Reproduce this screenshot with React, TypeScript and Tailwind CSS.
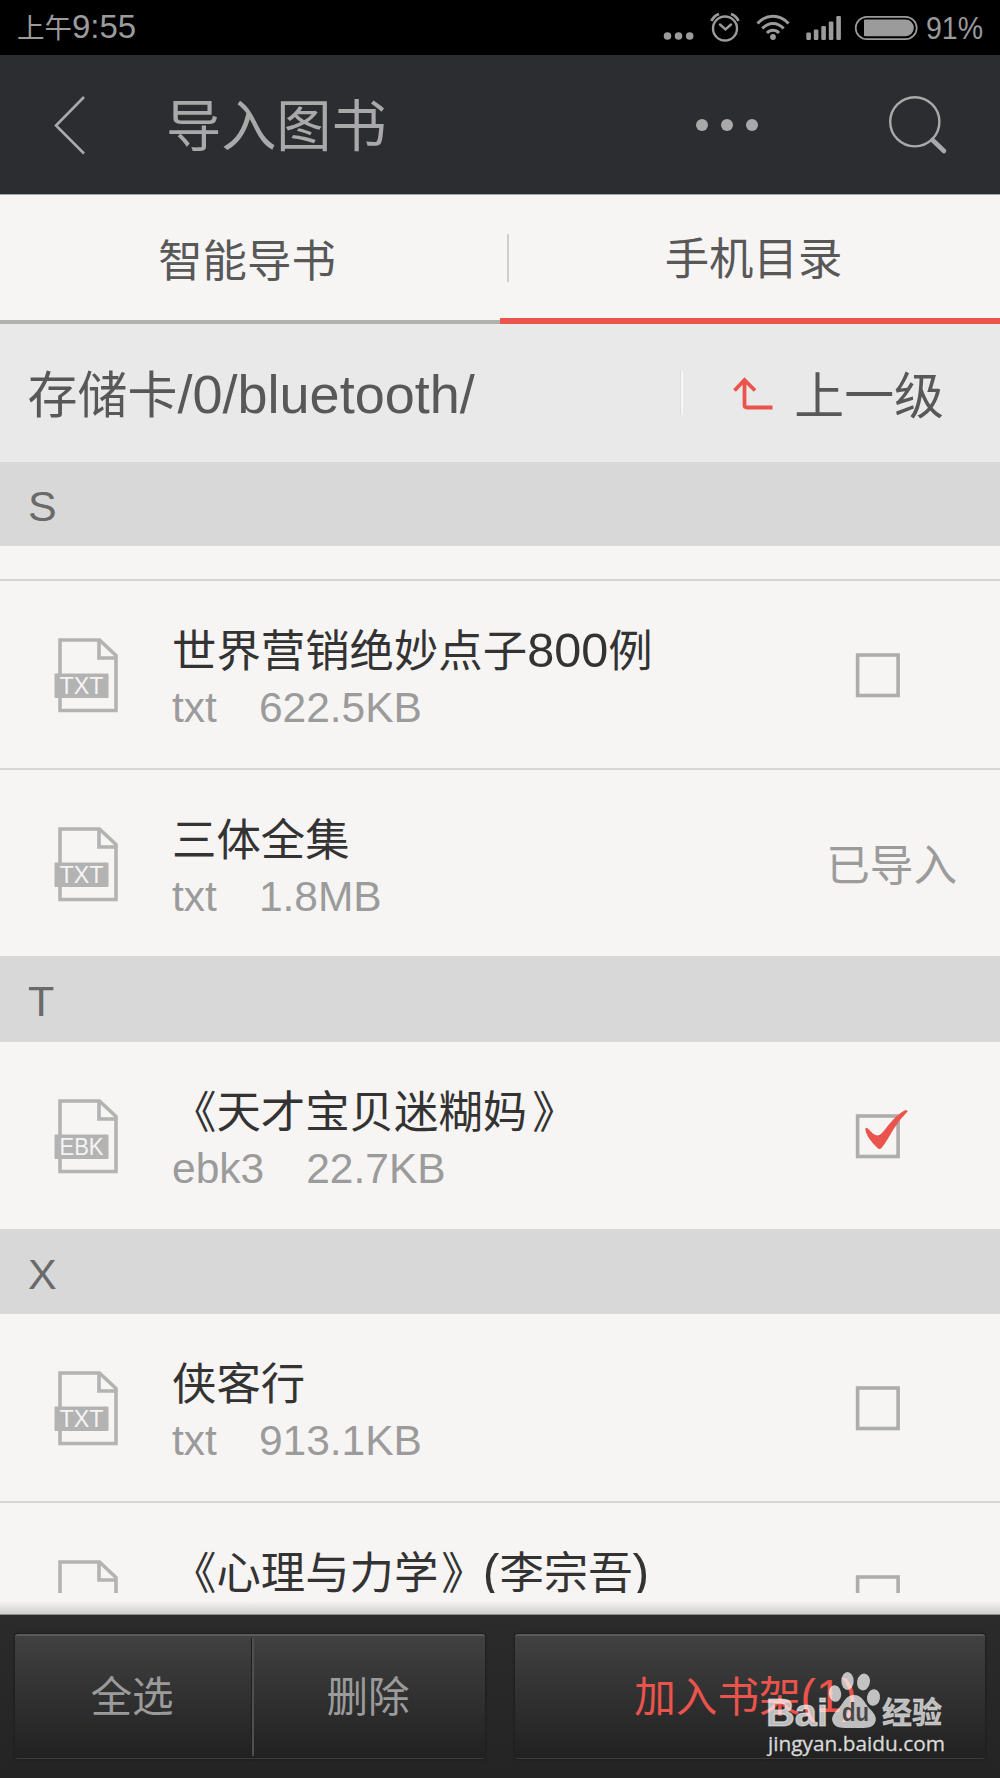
import { ReactNode } from "react";
import { twMerge } from "tailwind-merge";

type Book = {
  title: ReactNode;
  type: string;
  size: string;
  badge: "TXT" | "EBK";
  state: "empty" | "checked" | "imported";
};

const sectionS: Book[] = [
  {
    title: (
      <>
        世界营销绝妙点子
        <span className="text-[48.6px] leading-none">800</span>例
      </>
    ),
    type: "txt",
    size: "622.5KB",
    badge: "TXT",
    state: "empty",
  },
  {
    title: "三体全集",
    type: "txt",
    size: "1.8MB",
    badge: "TXT",
    state: "imported",
  },
];

const sectionT: Book[] = [
  {
    title: (
      <>
        《天才宝贝迷糊妈<span className="relative left-[5px]">》</span>
      </>
    ),
    type: "ebk3",
    size: "22.7KB",
    badge: "EBK",
    state: "checked",
  },
];

const sectionX: Book[] = [
  {
    title: "侠客行",
    type: "txt",
    size: "913.1KB",
    badge: "TXT",
    state: "empty",
  },
  {
    title: (
      <>
        《心理与力学<span className="relative left-[3px]">》</span>
        <span className="text-[50px] leading-none">(</span>李宗吾
        <span className="text-[50px] leading-none">)</span>
      </>
    ),
    type: "txt",
    size: "1.2MB",
    badge: "TXT",
    state: "empty",
  },
];

function StatusBar() {
  return (
    <div className="flex h-[55px] shrink-0 items-center bg-black pl-[17px] text-[#9b9b9b]">
      <p className="text-[27.5px] leading-[55px]">
        上午<span className="text-[33px]">9:55</span>
      </p>
      <svg className="ml-auto" width="340" height="55" viewBox="660 0 340 55">
        <g fill="currentColor">
          <circle cx="667.5" cy="36" r="3.8" />
          <circle cx="678.5" cy="36" r="3.8" />
          <circle cx="689.7" cy="36" r="3.8" />
        </g>
        <g fill="none" stroke="currentColor" strokeWidth="2.4">
          <circle cx="725" cy="28.5" r="12" />
          <path d="M711.5 21 Q713.5 16 719 14" strokeWidth="2.8" />
          <path d="M738.5 21 Q736.5 16 731 14" strokeWidth="2.8" />
          <path d="M720 24.5 L725.5 29.5 L731 24.5" strokeLinecap="round" />
        </g>
        <g fill="none" stroke="currentColor" strokeWidth="3">
          <path d="M757.5 23.5 Q764 16.2 773 16.2 T788.5 23.5" />
          <path d="M762.3 28.5 Q767 23.4 773 23.4 T783.7 28.5" />
          <path d="M767 33 Q769.5 30.2 773 30.2 T779 33" />
          <circle cx="773" cy="37" r="2.9" fill="currentColor" stroke="none" />
        </g>
        <g fill="currentColor">
          <rect x="806.3" y="32.5" width="4.6" height="7.5" rx="1.2" />
          <rect x="813.8" y="29.5" width="4.6" height="10.5" rx="1.2" />
          <rect x="821.3" y="26" width="4.6" height="14" rx="1.2" />
          <rect x="828.8" y="21.5" width="4.6" height="18.5" rx="1.2" />
          <rect x="836.3" y="16" width="4.6" height="24" rx="1.2" />
        </g>
        <rect
          x="855.7"
          y="16.8"
          width="61"
          height="22.4"
          rx="11.2"
          fill="none"
          stroke="currentColor"
          strokeWidth="1.7"
        />
        <path
          d="M865 19.5 H905.5 A8.3 8.3 0 0 1 905.5 36.2 H865 Q864 36.2 864 35.2 V20.5 Q864 19.5 865 19.5 Z"
          fill="currentColor"
        />
        <text
          x="926"
          y="39"
          fontSize="31"
          textLength="57"
          lengthAdjust="spacingAndGlyphs"
          fill="currentColor"
        >
          91%
        </text>
      </svg>
    </div>
  );
}

function TitleBar() {
  return (
    <header className="flex h-[139px] shrink-0 items-center bg-[#2c2d31] text-[#a9a9a9]">
      <svg className="ml-[51px]" width="36" height="62" viewBox="51 94 36 62">
        <path
          d="M84 97 L56 125.5 L84 153.5"
          fill="none"
          stroke="currentColor"
          strokeWidth="2.6"
        />
      </svg>
      <h1 className="ml-[79px] pt-[5px] text-[55.2px] leading-[72px]">
        导入图书
      </h1>
      <svg className="ml-auto" width="64" height="14" viewBox="0 0 64 14">
        <g fill="currentColor">
          <circle cx="7" cy="7" r="6" />
          <circle cx="32" cy="7" r="6" />
          <circle cx="57" cy="7" r="6" />
        </g>
      </svg>
      <svg
        className="ml-[127px] mr-[52px]"
        width="62"
        height="62"
        viewBox="886 94 62 62"
      >
        <circle
          cx="914.8"
          cy="121.8"
          r="24.6"
          fill="none"
          stroke="currentColor"
          strokeWidth="2.4"
        />
        <path
          d="M932.5 140 L944 151"
          stroke="currentColor"
          strokeWidth="4.6"
          strokeLinecap="round"
        />
      </svg>
    </header>
  );
}

function Tabs() {
  return (
    <nav className="h-[130px] shrink-0 border-t border-t-[#a5a5a5] bg-[#f6f5f3] text-[#585858]">
      <div className="flex h-[122px] items-center text-[44.4px] leading-[60px]">
        <p className="w-[494px] pt-[11px] text-center">智能导书</p>
        <div className="ml-[13px] mt-[3px] h-[48px] w-[2px] bg-[#cfcfcd]" />
        <p className="flex-1 pr-[2px] pt-[8px] text-center">手机目录</p>
      </div>
      <div className="flex h-[7px] items-end">
        <div className="h-[4px] w-1/2 bg-[#b0b0af]" />
        <div className="h-[6px] w-1/2 bg-[#eb544c]" />
      </div>
    </nav>
  );
}

function PathBar() {
  return (
    <div className="flex h-[138px] shrink-0 items-center bg-[#e9e9e9] text-[50px] leading-[70px] text-[#585858]">
      <p className="pl-[27.5px] pt-[6px]">
        存储卡<span className="text-[54px] leading-none">/0/bluetooth/</span>
      </p>
      <div className="ml-auto h-[44px] w-[3px] border-l border-l-[#dcdcdc] bg-[#f6f6f6]" />
      <svg className="ml-[48px]" width="44" height="40" viewBox="731 372 44 40">
        <path
          d="M744.5 378.5 V404 Q744.5 406.5 747 406.5 H772.5 M734.5 389.5 L744.5 379 L755 389.5"
          fill="none"
          stroke="#eb544c"
          strokeWidth="3.8"
        />
      </svg>
      <p className="ml-[19px] mr-[56px] pt-[7px] text-[49.9px]">上一级</p>
    </div>
  );
}

function SectionHeader({
  letter,
  className = "",
}: {
  letter: string;
  className?: string;
}) {
  return (
    <h2
      className={twMerge(
        "h-[86px] shrink-0 bg-[#d8d8d8] pl-[28px] text-[43px] leading-[90px] text-[#6a6a6a]",
        className,
      )}
    >
      {letter}
    </h2>
  );
}

function FileIcon({ badge }: { badge: string }) {
  return (
    <svg width="66" height="76" viewBox="0 0 66 76" className="shrink-0">
      <path
        d="M6 2 H45.5 L62 17.5 V72.5 H6 Z M45 2 V20 H62"
        fill="none"
        stroke="#b3b3b3"
        strokeWidth="3.6"
      />
      <rect x="0.5" y="35.5" width="54" height="24.5" rx="1" fill="#b3b3b3" />
      <text
        x="5.5"
        y="55.8"
        fontSize="23.5"
        textLength="44"
        lengthAdjust="spacingAndGlyphs"
        fill="#f4f4f4"
      >
        {badge}
      </text>
    </svg>
  );
}

function CheckBox({ checked }: { checked: boolean }) {
  return (
    <svg width="56" height="52" viewBox="0 0 56 52">
      <rect
        x="2.6"
        y="8"
        width="40.5"
        height="40.5"
        fill="none"
        stroke="#adadac"
        strokeWidth="3.6"
      />
      {checked ? (
        <path
          d="M10.3 21.5 Q10.5 18.5 13.5 21 Q18 26.5 22 27.5 Q25 27.5 28 24 Q41 6.5 50 2.3 Q53 2 52.5 3.5 Q44 12 38 22 Q31 34.5 26.5 40 Q24.5 42 22.5 40 Q11 29 10.3 21.5 Z"
          fill="#eb544c"
        />
      ) : null}
    </svg>
  );
}

function BookRow({ book, last = true }: { book: Book; last?: boolean }) {
  return (
    <li
      className={twMerge(
        "flex h-[187px] shrink-0 pl-[54px]",
        last ? "" : "h-[189px] border-b-2 border-b-[#d6d6d5]",
      )}
    >
      <div className="pt-[57px]">
        <FileIcon badge={book.badge} />
      </div>
      <div className="ml-[52px] pt-[44px]">
        <p className="h-[54px] whitespace-nowrap text-[44.4px] leading-[54px] text-[#333333]">
          {book.title}
        </p>
        <p className="mt-[6px] flex gap-[42px] text-[42.5px] leading-[46px] text-[#9b9b9b]">
          <span>{book.type}</span>
          <span>{book.size}</span>
        </p>
      </div>
      {book.state === "imported" ? (
        <p className="ml-auto mr-[43px] pt-[71px] text-[43.6px] leading-[50px] text-[#9b9b9b]">
          已导入
        </p>
      ) : (
        <div className="ml-auto mr-[89px] pt-[66px]">
          <CheckBox checked={book.state === "checked"} />
        </div>
      )}
    </li>
  );
}

function BarButton({
  children,
  className = "",
}: {
  children: ReactNode;
  className?: string;
}) {
  return (
    <button
      className={twMerge(
        "h-full flex-1 pt-[1px] text-[41.6px] leading-[56px] text-[#9b9b9b]",
        className,
      )}
    >
      {children}
    </button>
  );
}

function Watermark() {
  return (
    <svg
      className="absolute left-[764px] top-[1668px]"
      width="186"
      height="94"
      viewBox="764 1668 186 94"
    >
      <g fill="#ffffff" fillOpacity="0.7">
        <text
          x="766"
          y="1726"
          fontSize="39"
          fontWeight="bold"
          stroke="#ffffff"
          strokeOpacity="0.5"
          strokeWidth="1.2"
          textLength="62"
          lengthAdjust="spacingAndGlyphs"
        >
          Bai
        </text>
        <ellipse cx="835" cy="1693.5" rx="6.2" ry="8.3" transform="rotate(-8 835 1693.5)" />
        <ellipse cx="847.5" cy="1681" rx="6.2" ry="9" />
        <ellipse cx="863.5" cy="1682" rx="6.4" ry="8.5" transform="rotate(10 863.5 1682)" />
        <ellipse cx="873.5" cy="1697.5" rx="6.5" ry="8.3" transform="rotate(8 873.5 1697.5)" />
        <path d="M854 1695 C862 1695 864 1702 869 1708 C874 1713 877 1717 875.5 1721.5 C873 1729 865 1728 854 1728 C843 1728 835 1729 832.5 1721.5 C831 1717 834 1713 839 1708 C844 1702 846 1695 854 1695 Z" />
        <text
          x="882"
          y="1723"
          fontSize="30"
          fontWeight="bold"
          stroke="#ffffff"
          strokeOpacity="0.4"
          strokeWidth="0.8"
          textLength="60"
          lengthAdjust="spacingAndGlyphs"
        >
          经验
        </text>
      </g>
      <text
        x="842"
        y="1721"
        fontSize="26"
        fontWeight="bold"
        fill="#4a4646"
        textLength="27"
        lengthAdjust="spacingAndGlyphs"
      >
        du
      </text>
      <text
        x="768"
        y="1750.5"
        fontSize="20.5"
        fill="#d9d9d9"
        stroke="#d9d9d9"
        strokeWidth="0.3"
        className="font-['Open_Sans']"
        textLength="177"
        lengthAdjust="spacingAndGlyphs"
      >
        jingyan.baidu.com
      </text>
    </svg>
  );
}

const panel =
  "flex h-[125px] w-[470px] rounded-[3px] border-t-2 border-t-[#5a5a5a] border-b border-b-[#3c3c3c] bg-linear-to-b from-[#414141] to-[#212121] shadow-[0_0_2px_1px_#1e1e1e]";

export default function App() {
  return (
    <div className="relative flex h-[1778px] w-[1000px] flex-col overflow-hidden bg-[#f6f5f3] font-['Liberation_Sans','Noto_Sans_CJK_SC',sans-serif]">
      <StatusBar />
      <TitleBar />
      <Tabs />
      <PathBar />
      <main className="flex h-[1131px] shrink-0 flex-col overflow-hidden">
        <SectionHeader letter="S" className="h-[84px] leading-[88px]" />
        {/* tail of the row scrolled under the sticky header */}
        <div className="h-[35px] shrink-0 border-b-2 border-b-[#d6d6d5]" />
        <ul>
          {sectionS.map((book, idx) => (
            <BookRow key={book.size} book={book} last={idx === 1} />
          ))}
        </ul>
        <SectionHeader letter="T" className="-mt-px" />
        <ul>
          {sectionT.map((book) => (
            <BookRow key={book.size} book={book} />
          ))}
        </ul>
        <SectionHeader letter="X" className="h-[85px]" />
        <ul>
          {sectionX.map((book, idx) => (
            <BookRow key={book.size} book={book} last={idx === 1} />
          ))}
        </ul>
      </main>
      <div className="mt-[8px] h-[14px] shrink-0 border-b border-b-[#8f8f8f] bg-linear-to-b from-[#f6f5f3] to-[#cfcfcd]" />
      <footer className="flex h-[163px] shrink-0 gap-[30px] bg-linear-to-b from-[#2b2b2b] to-[#242424] pl-[15px] pt-[19px]">
        <div className={panel}>
          <BarButton className="w-[236px] flex-none pr-[2px]">全选</BarButton>
          <div className="my-[2px] w-[3px] border-l border-l-[#1e1e1e] bg-[#505050]" />
          <BarButton className="pr-[3px]">删除</BarButton>
        </div>
        <div className={panel}>
          <BarButton className="pr-[9px] text-[#eb544c]">
            加入书架<span className="text-[46px] leading-none">(1)</span>
          </BarButton>
        </div>
      </footer>
      <Watermark />
    </div>
  );
}
